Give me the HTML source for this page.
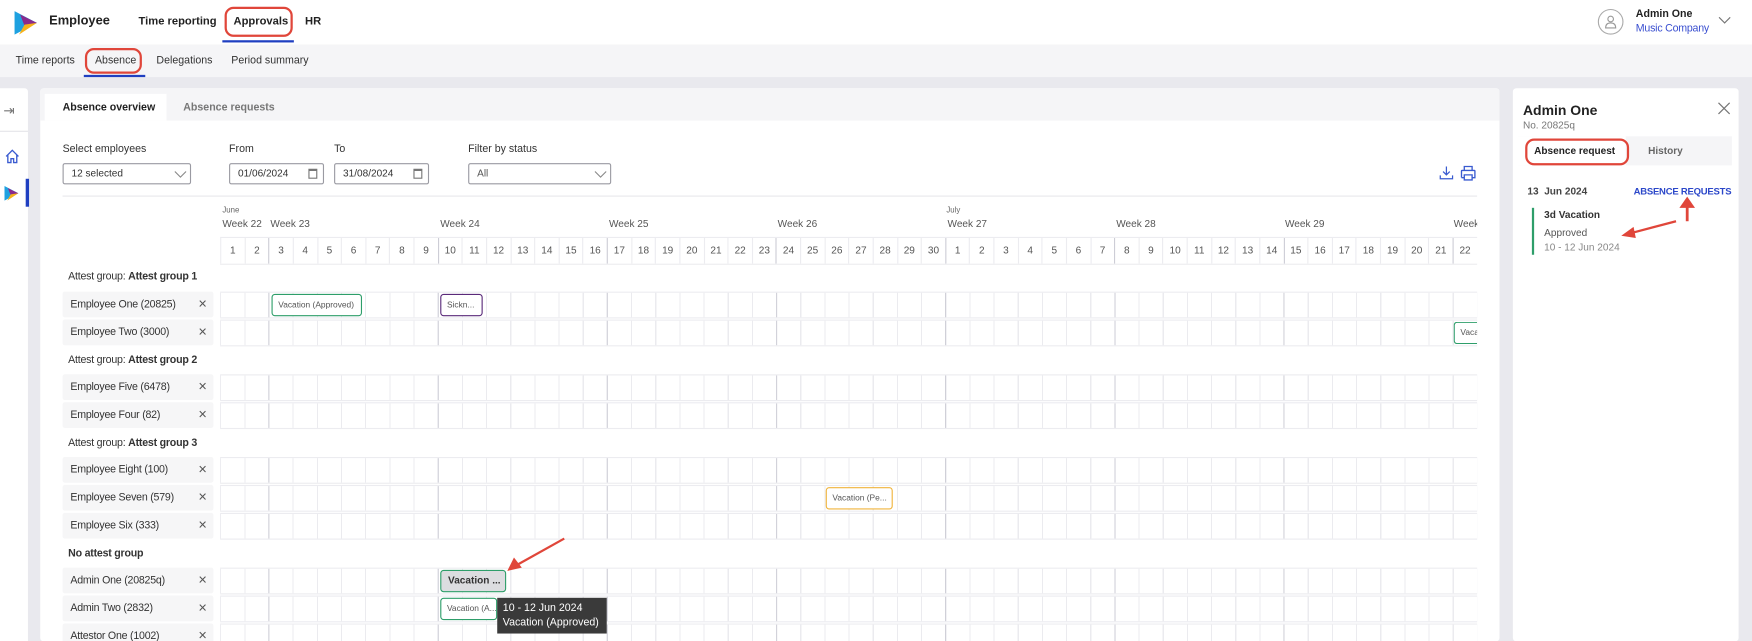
<!DOCTYPE html>
<html><head><meta charset="utf-8">
<style>
*{box-sizing:border-box;margin:0;padding:0}
html,body{width:1752px;height:641px;overflow:hidden;background:#e9e9ee}
#s{position:absolute;left:0;top:0;width:1568px;height:574px;overflow:hidden;transform:scale(1.11735);transform-origin:0 0;font-family:"Liberation Sans",sans-serif;color:#333;font-size:9.5px;background:#e9e9ee}
.a{position:absolute}
.b{font-weight:bold}
.top{left:0;top:0;width:1568px;height:40px;background:#fff}
.sub{left:0;top:40px;width:1568px;height:29px;background:#f5f5f7}
.red{border:2.5px solid #e0463a;border-radius:8px}
.inp{height:19px;border:1px solid #9a9aa2;border-radius:2px;background:#fff;padding:3px 7px;font-size:9px}
.row{position:absolute;left:197px;width:1125px;height:24px;background-image:repeating-linear-gradient(to right,transparent 0 150.41px,#cdcdd6 150.41px 151.41px),repeating-linear-gradient(to right,#ebebef 0 1px,transparent 1px 21.63px);background-position:-107.15px 0,0 0;border-top:1px solid #ececf0;border-bottom:1px solid #ececf0}
.nm{position:absolute;left:56px;width:135px;height:23px;background:#f6f6f7;border-radius:2px;padding:6px 7px;font-size:9.5px;letter-spacing:-0.2px}
.nm i{position:absolute;right:6px;top:3px;font-style:normal;font-size:13px;color:#555}
.gl{position:absolute;left:61px;font-size:9.5px;letter-spacing:-0.2px}
.ev{position:absolute;height:20px;border:1.5px solid #2e9e6a;border-radius:3px;background:#fff;font-size:7.5px;padding:4px 5px;white-space:nowrap;overflow:hidden;color:#555}
.days{position:absolute;left:197px;top:212px;width:1125px;height:25px;display:flex;border-top:1px solid #ececf0;border-bottom:1px solid #ececf0;overflow:hidden}
.days span{flex:0 0 21.63px;text-align:center;border-left:1px solid #ececf0;line-height:23px;font-size:9px;color:#555}
.days span.w{border-left:1px solid #cdcdd6}
.wk{position:absolute;top:195px;font-size:9px;color:#555}
</style></head><body><div id="s">
<div class="a top"></div>
<svg class="a" style="left:13px;top:10px" width="21" height="21" viewBox="0 0 21 21"><polygon points="0,0 20,10.5 0,21" fill="#1ea1e0"/><polygon points="5,3 20,10.5 10,16" fill="#8a2a8c"/><polygon points="9,12 20,10.5 4,21" fill="#f6b21b"/></svg>
<div class="a b" style="left:44px;top:13px;font-size:11.5px;color:#222">Employee</div>
<div class="a b" style="left:124px;top:14px;font-size:10px;color:#222">Time reporting</div>
<div class="a red" style="left:201px;top:6px;width:61px;height:27px"></div>
<div class="a b" style="left:209px;top:14px;font-size:10px;color:#222">Approvals</div>
<div class="a" style="left:199px;top:36px;width:64px;height:2px;background:#1f3fc1"></div>
<div class="a b" style="left:273px;top:14px;font-size:10px;color:#222">HR</div>
<div class="a" style="left:1430px;top:8px;width:23px;height:23px;border:1px solid #aaa;border-radius:50%"></div>
<svg class="a" style="left:1435px;top:13px" width="13" height="13" viewBox="0 0 13 13"><circle cx="6.5" cy="4" r="2.5" fill="none" stroke="#999"/><path d="M2 12 Q2 7.5 6.5 7.5 Q11 7.5 11 12 Z" fill="none" stroke="#999"/></svg>
<div class="a b" style="left:1464px;top:7px;font-size:9.5px;color:#222">Admin One</div>
<div class="a" style="left:1464px;top:20px;font-size:9.5px;color:#3a4fd0;letter-spacing:-0.2px">Music Company</div>
<svg class="a" style="left:1538px;top:15px" width="11" height="7"><path d="M0.5 0.5 L5.5 5.5 L10.5 0.5" fill="none" stroke="#777"/></svg>

<div class="a sub"></div>
<div class="a" style="left:14px;top:49px;color:#333">Time reports</div>
<div class="a red" style="left:76px;top:43px;width:51px;height:23px"></div>
<div class="a" style="left:85px;top:49px;color:#333">Absence</div>
<div class="a" style="left:75px;top:67px;width:55px;height:2px;background:#1f3fc1"></div>
<div class="a" style="left:140px;top:49px;color:#333">Delegations</div>
<div class="a" style="left:207px;top:49px;color:#333">Period summary</div>

<div class="a" style="left:0;top:79px;width:25px;height:495px;background:#fff;border-radius:0 3px 0 0"></div>
<div class="a" style="left:3px;top:92px;font-size:12px;color:#777">⇥</div>
<div class="a" style="left:0;top:117px;width:25px;height:1px;background:#e4e4e8"></div>
<svg class="a" style="left:4px;top:133px" width="14" height="14" viewBox="0 0 14 14"><path d="M1.5 7 L7 1.5 L12.5 7 M3 5.5 V12.5 H5.8 V9 H8.2 V12.5 H11 V5.5" fill="none" stroke="#3a5bd0" stroke-width="1.2"/></svg>
<svg class="a" style="left:4px;top:166px" width="13" height="14" viewBox="0 0 21 21"><polygon points="0,0 20,10.5 0,21" fill="#1ea1e0"/><polygon points="5,3 20,10.5 10,16" fill="#8a2a8c"/><polygon points="9,12 20,10.5 4,21" fill="#f6b21b"/></svg>
<div class="a" style="left:23px;top:160px;width:3px;height:25px;background:#1f3fc1"></div>

<div class="a" style="left:36px;top:79px;width:1306px;height:495px;background:#fff;border-radius:3px"></div>
<div class="a" style="left:36px;top:79px;width:1306px;height:29px;background:#f5f5f7;border-radius:3px 3px 0 0"></div>
<div class="a" style="left:40px;top:84px;width:109px;height:24px;background:#fff"></div>
<div class="a b" style="left:56px;top:91px;color:#222">Absence overview</div>
<div class="a b" style="left:164px;top:91px;color:#777">Absence requests</div>

<div class="a" style="left:56px;top:128px">Select employees</div>
<div class="a" style="left:205px;top:128px">From</div>
<div class="a" style="left:299px;top:128px">To</div>
<div class="a" style="left:419px;top:128px">Filter by status</div>
<div class="a inp" style="left:56px;top:146px;width:115px">12 selected</div>
<svg class="a" style="left:156px;top:153px" width="11" height="7"><path d="M0.5 0.5 L5.5 5.5 L10.5 0.5" fill="none" stroke="#888"/></svg>
<div class="a inp" style="left:205px;top:146px;width:85px">01/06/2024</div>
<div class="a" style="left:276px;top:151px;width:8px;height:9px;border:1px solid #777;border-top-width:2px"></div>
<div class="a inp" style="left:299px;top:146px;width:85px">31/08/2024</div>
<div class="a" style="left:370px;top:151px;width:8px;height:9px;border:1px solid #777;border-top-width:2px"></div>
<div class="a inp" style="left:419px;top:146px;width:128px;color:#555">All</div>
<svg class="a" style="left:532px;top:153px" width="11" height="7"><path d="M0.5 0.5 L5.5 5.5 L10.5 0.5" fill="none" stroke="#888"/></svg>
<svg class="a" style="left:1288px;top:148px" width="13" height="13" viewBox="0 0 13 13"><path d="M6.5 1 V8.5 M3.5 5.5 L6.5 8.5 L9.5 5.5 M1 9 V12 H12 V9" fill="none" stroke="#3a5bd0" stroke-width="1.1"/></svg>
<svg class="a" style="left:1307px;top:148px" width="14" height="14" viewBox="0 0 14 14"><path d="M3.5 4.5 V1 H10.5 V4.5 M1 11 V5 Q1 4.5 1.5 4.5 H12.5 Q13 4.5 13 5 V11 H10.5 M3.5 11 H1 M3.5 8.5 H10.5 V13 H3.5 Z" fill="none" stroke="#3a5bd0" stroke-width="1.2"/></svg>
<div class="a" style="left:56px;top:175px;width:1266px;height:1px;background:#e8e8ec"></div>

<div class="a" style="left:199px;top:185px;font-size:7px;color:#666">June</div>
<div class="a" style="left:847px;top:185px;font-size:7px;color:#666">July</div>
<div class="wk" style="left:199px">Week 22</div>
<div class="wk" style="left:242px">Week 23</div>
<div class="wk" style="left:394px">Week 24</div>
<div class="wk" style="left:545px">Week 25</div>
<div class="wk" style="left:696px">Week 26</div>
<div class="wk" style="left:848px">Week 27</div>
<div class="wk" style="left:999px">Week 28</div>
<div class="wk" style="left:1150px">Week 29</div>
<div class="wk" style="left:1301px;width:21px;overflow:hidden;white-space:nowrap">Week 30</div>
<div class="days"><span>1</span><span>2</span><span class="w">3</span><span>4</span><span>5</span><span>6</span><span>7</span><span>8</span><span>9</span><span class="w">10</span><span>11</span><span>12</span><span>13</span><span>14</span><span>15</span><span>16</span><span class="w">17</span><span>18</span><span>19</span><span>20</span><span>21</span><span>22</span><span>23</span><span class="w">24</span><span>25</span><span>26</span><span>27</span><span>28</span><span>29</span><span>30</span><span class="w">1</span><span>2</span><span>3</span><span>4</span><span>5</span><span>6</span><span>7</span><span class="w">8</span><span>9</span><span>10</span><span>11</span><span>12</span><span>13</span><span>14</span><span class="w">15</span><span>16</span><span>17</span><span>18</span><span>19</span><span>20</span><span>21</span><span class="w">22</span></div>

<div class="gl" style="top:242px">Attest group: <b>Attest group 1</b></div>
<div class="nm" style="top:261px">Employee One (20825)<i>×</i></div><div class="row" style="top:261px"></div>
<div class="nm" style="top:286px">Employee Two (3000)<i>×</i></div><div class="row" style="top:286px"></div>
<div class="gl" style="top:317px">Attest group: <b>Attest group 2</b></div>
<div class="nm" style="top:335px">Employee Five (6478)<i>×</i></div><div class="row" style="top:335px"></div>
<div class="nm" style="top:360px">Employee Four (82)<i>×</i></div><div class="row" style="top:360px"></div>
<div class="gl" style="top:391px">Attest group: <b>Attest group 3</b></div>
<div class="nm" style="top:409px">Employee Eight (100)<i>×</i></div><div class="row" style="top:409px"></div>
<div class="nm" style="top:434px">Employee Seven (579)<i>×</i></div><div class="row" style="top:434px"></div>
<div class="nm" style="top:459px">Employee Six (333)<i>×</i></div><div class="row" style="top:459px"></div>
<div class="gl b" style="top:490px">No attest group</div>
<div class="nm" style="top:508px">Admin One (20825q)<i>×</i></div><div class="row" style="top:508px"></div>
<div class="nm" style="top:533px">Admin Two (2832)<i>×</i></div><div class="row" style="top:533px"></div>
<div class="nm" style="top:558px">Attestor One (1002)<i>×</i></div><div class="row" style="top:558px"></div>

<div class="ev" style="left:243px;top:263px;width:81px">Vacation (Approved)</div>
<div class="ev" style="left:394px;top:263px;width:38px;border-color:#5a2a7a">Sickn...</div>
<div class="ev" style="left:1301px;top:288px;width:21px;border-right:none;border-radius:3px 0 0 3px">Vacation</div>
<div class="ev" style="left:739px;top:436px;width:60px;border-color:#f0b43c">Vacation (Pe...</div>
<div class="ev b" style="left:394px;top:510px;width:59px;background:#dcdde0;font-size:9px;padding:3px 6px;color:#333">Vacation ...</div>
<div class="ev" style="left:394px;top:535px;width:51px">Vacation (A...</div>
<div class="a" style="left:445px;top:535px;width:98px;height:32px;background:#3a3a3a;color:#fff;font-size:9.5px;padding:3px 5px;line-height:13px">10 - 12 Jun 2024<br>Vacation (Approved)</div>
<svg class="a" style="left:0;top:0" width="1568" height="574"><path d="M505 482 L462 506" stroke="#e0463a" stroke-width="2"/><polygon points="454,511 460,499 467,508" fill="#e0463a"/></svg>

<div class="a" style="left:1354px;top:79px;width:202px;height:495px;background:#fff;border-radius:3px"></div>
<div class="a b" style="left:1363px;top:92px;font-size:12.5px;color:#222">Admin One</div>
<div class="a" style="left:1363px;top:107px;font-size:9px;color:#777">No. 20825q</div>
<svg class="a" style="left:1537px;top:91px" width="12" height="12"><path d="M1 1 L11 11 M11 1 L1 11" stroke="#777" stroke-width="1.1"/></svg>
<div class="a" style="left:1359px;top:122px;width:191px;height:26px;background:#f5f5f7"></div>
<div class="a" style="left:1359px;top:122px;width:96px;height:26px;background:#fff"></div>
<div class="a red" style="left:1365px;top:124px;width:93px;height:24px"></div>
<div class="a b" style="left:1373px;top:130px;color:#222;font-size:9px">Absence request</div>
<div class="a b" style="left:1475px;top:130px;color:#666;font-size:9px">History</div>
<div class="a b" style="left:1367px;top:166px;color:#444;font-size:9px">13&nbsp; Jun 2024</div>
<div class="a b" style="left:1462px;top:166px;color:#2b47c9;font-size:8.5px;letter-spacing:-0.2px">ABSENCE REQUESTS</div>
<div class="a" style="left:1371px;top:186px;width:2px;height:42px;background:#2e9e6a"></div>
<div class="a b" style="left:1382px;top:187px;color:#333;font-size:9px">3d Vacation</div>
<div class="a" style="left:1382px;top:203px;color:#555;font-size:9px">Approved</div>
<div class="a" style="left:1382px;top:216px;color:#888;font-size:9px">10 - 12 Jun 2024</div>
<svg class="a" style="left:0;top:0" width="1568" height="574"><path d="M1500 198 L1462 208" stroke="#e0463a" stroke-width="2"/><polygon points="1451,211 1462,203 1464,213" fill="#e0463a"/><path d="M1510 198 L1510 184" stroke="#e0463a" stroke-width="2.5"/><polygon points="1503,186 1510,176 1517,186" fill="#e0463a"/></svg>
</div></body></html>
